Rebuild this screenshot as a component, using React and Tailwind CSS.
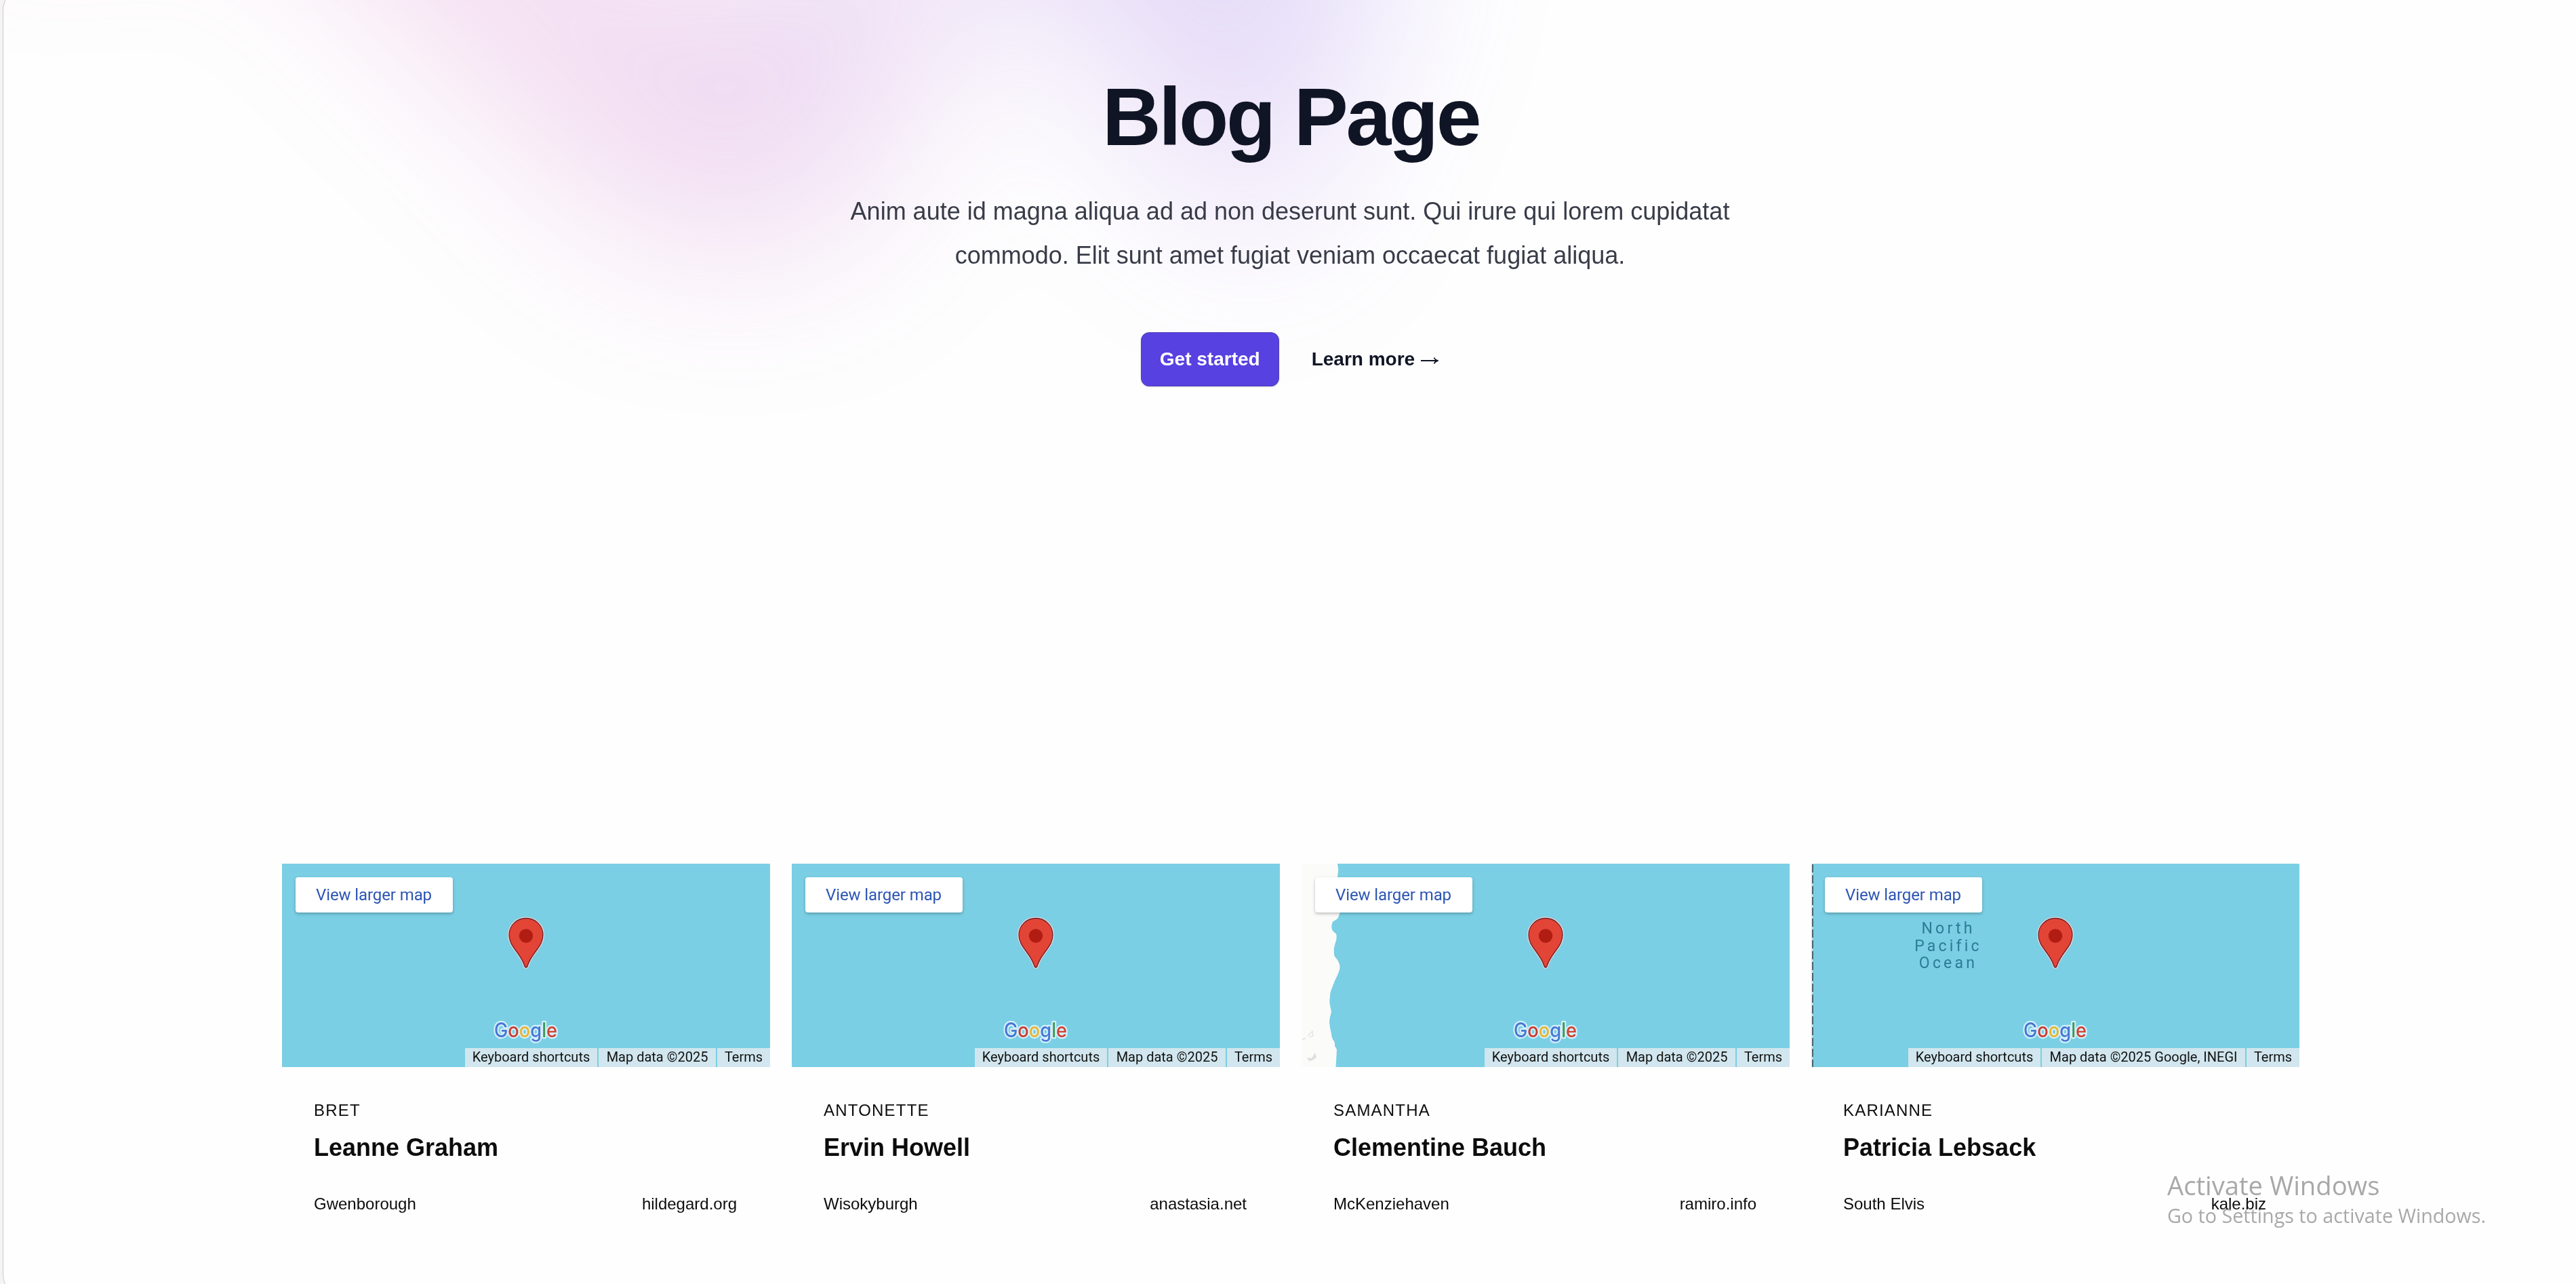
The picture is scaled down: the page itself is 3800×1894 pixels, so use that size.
const people = [
  { username: 'Bret', name: 'Leanne Graham', city: 'Gwenborough', site: 'hildegard.org', credit: 'Map data ©2025', creditWidth: 'w-[173px]' },
  { username: 'Antonette', name: 'Ervin Howell', city: 'Wisokyburgh', site: 'anastasia.net', credit: 'Map data ©2025', creditWidth: 'w-[173px]' },
  { username: 'Samantha', name: 'Clementine Bauch', city: 'McKenziehaven', site: 'ramiro.info', credit: 'Map data ©2025', creditWidth: 'w-[173px]', terrain: 'coast' },
  { username: 'Karianne', name: 'Patricia Lebsack', city: 'South Elvis', site: 'kale.biz', credit: 'Map data ©2025 Google, INEGI', creditWidth: 'w-[300px]', terrain: 'ocean' },
];

function Pin() {
  return (
    <svg className="absolute left-[333px] top-[78px] h-[78px] w-[54px]" viewBox="0 0 54 78">
      <path
        d="M27 1.5C12.6 1.5 1 12.8 1 27c0 9.400 4.500 16 10 23.500 6 8 10 13.500 12.300 21 .8 2.800 1.600 4.500 3.700 4.500s2.900-1.700 3.700-4.500C33 64 37 58.500 43 50.500 48.500 43 53 36.400 53 27 53 12.800 41.400 1.500 27 1.500Z"
        fill="#e24536" stroke="#e9d3d0" strokeWidth="2"
      />
      <path
        d="M27 2.500C13.200 2.500 2 13.300 2 27c0 9 4.300 15.600 9.800 23 6 8 10.200 13.800 12.500 21.300.7 2.500 1.300 3.700 2.700 3.700s2-1.200 2.700-3.700C32 63.800 36.200 58 42.200 50 47.700 42.600 52 36 52 27 52 13.300 40.800 2.500 27 2.500Z"
        fill="#e24536" stroke="#6d2230" strokeWidth="1.300"
      />
      <circle cx="27" cy="28.500" r="10.200" fill="#b11d12" />
    </svg>
  );
}

function GoogleMark() {
  return (
    <svg className="absolute left-[308px] top-[226px] h-[44px] w-[104px]" viewBox="0 0 104 44">
      <text
        x="5" y="30" fontFamily="Inter, sans-serif" fontSize="29.500" fontWeight="500"
        textLength="93" lengthAdjust="spacingAndGlyphs" paintOrder="stroke" stroke="#d6f0fa" strokeWidth="4.500" strokeLinejoin="round"
      >
        <tspan fill="#4678d4">G</tspan>
        <tspan fill="#cb3b30">o</tspan>
        <tspan fill="#e8b62f">o</tspan>
        <tspan fill="#4678d4">g</tspan>
        <tspan fill="#3b9a57">l</tspan>
        <tspan fill="#cf4334">e</tspan>
      </text>
    </svg>
  );
}

function Coast() {
  return (
    <svg className="absolute inset-0 h-full w-full" viewBox="0 0 720 300">
      <path
        d="M0 0H53L54.300 9 53 19 57 70 C56 75 54 80 53 81 C50 84 46 84 45 88 C44 93 44 96 46 99 C48 102 51 102 51.500 105 C52 111 51 113 49 120 C47 126 48 130 48 134 C49 139 53 140 54.500 145 C57 150 57 153 55.500 158 C53 166 50 170 48.500 174 C46 181 42 188 42 196 C40 206 43 212 44 218 C43 224 40 230 41.500 238 C42 244 44 248 44.500 255 C46 261 50 262 49 269 L52 274 50.500 300H0Z"
        fill="#fbfbfa"
      />
      <path d="M9 254l7-7 1 7-6 2M1 260l5-3" stroke="#e4e4e4" strokeWidth="1.500" fill="none" />
      <path d="M8 286l7 1 5-8 2 7-6 4-5 1Z" fill="#dedede" />
    </svg>
  );
}

function Ocean() {
  return (
    <>
      <svg className="absolute left-0 top-0 h-[300px] w-[4px]" viewBox="0 0 4 300">
        <path d="M1 0V300" stroke="#e7f3f7" strokeWidth="1.500" />
        <path d="M2 1V300" stroke="#51606e" strokeWidth="2" strokeDasharray="12 4" />
      </svg>
      <div className="absolute left-[130px] top-[83px] w-[144px] text-center font-['Roboto',sans-serif] text-[23px] leading-[25.700px] tracking-[4.200px] text-[#2b7c94]">
        North<br />Pacific<br />Ocean
      </div>
    </>
  );
}

function MapEmbed({ person }) {
  return (
    <div className="relative flex h-[300px] flex-col justify-between overflow-hidden bg-[#7acfe4] font-['Roboto',sans-serif]">
      {person.terrain === 'coast' && <Coast />}
      {person.terrain === 'ocean' && <Ocean />}
      <a className="relative ml-5 mt-[20px] flex h-[52px] w-[232px] items-center justify-center rounded-[4px] bg-white pr-px text-[24px] tracking-[-0.100px] text-[#2c55b3] shadow-[0_2px_4px_rgba(0,0,0,0.25)]">
        View larger map
      </a>
      <Pin />
      <GoogleMark />
      <div className="flex h-[28px] justify-end gap-[2px] text-[20px] leading-[27px] text-[#111] *:bg-[#d1e6ee] *:text-center">
        <span className="w-[195px]">Keyboard shortcuts</span>
        <span className={person.creditWidth}>{person.credit}</span>
        <span className="w-[78px]">Terms</span>
      </div>
    </div>
  );
}

function Card({ person }) {
  return (
    <article className="w-[720px]">
      <MapEmbed person={person} />
      <div className="pl-[47px] pr-[49px] pt-11 text-[#0c0c0c]">
        <p className="text-[24px] uppercase leading-10 tracking-wider">{person.username}</p>
        <h2 className="mt-[7px] text-[36px] font-bold leading-[56px]">{person.name}</h2>
        <div className="mt-[37px] flex justify-between text-[24px] leading-9">
          <span>{person.city}</span>
          <span>{person.site}</span>
        </div>
      </div>
    </article>
  );
}

export default function App() {
  return (
    <div className="relative h-[1894px] overflow-hidden bg-[#f4f4f4] pl-[4px] font-['Liberation_Sans',Arial,sans-serif]">
      <div className="relative isolate -mt-[17px] h-[1929px] overflow-hidden rounded-l-[32px] border-l border-[#c9c9c9] bg-[#fefefe]">
        <div className="absolute inset-x-0 -top-[975px] -z-10 transform-gpu overflow-hidden opacity-30 blur-[128px]" aria-hidden="true">
          <div className="relative left-[calc(50%-958px)] aspect-[1155/678] w-[2310px] -translate-x-1/2 rotate-[30deg] bg-gradient-to-tr from-[#ff80b5] to-[#9089fc] [clip-path:polygon(74.1%_44.1%,100%_61.6%,97.5%_26.9%,85.5%_0.1%,80.7%_2%,72.5%_32.5%,60.2%_62.4%,52.4%_68.1%,47.5%_58.3%,45.2%_34.5%,27.5%_76.7%,0.1%_64.9%,17.9%_100%,27.6%_76.8%,76.1%_97.7%,74.1%_44.1%)]" />
        </div>

        <header className="flex h-[1291px] flex-col items-center pl-px pt-[129px] text-center">
          <h1 className="pl-[2px] text-[120px] font-bold leading-none tracking-[-3.400px] text-[#101526]">Blog Page</h1>
          <p className="mt-12 w-[1344px] text-[36px] leading-[1.8] text-[#383b48]">
            Anim aute id magna aliqua ad ad non deserunt sunt. Qui irure qui lorem cupidatat commodo. Elit sunt amet fugiat veniam occaecat fugiat aliqua.
          </p>
          <div className="mt-20 flex items-center gap-x-12 text-[28px] font-bold">
            <a className="flex h-20 items-center rounded-xl border border-[#4f41b8] bg-[#5741e0] px-[27px] text-white shadow-sm">Get started</a>
            <a className="flex items-center gap-2 text-[#101526]">
              Learn more
              <svg className="mt-1 h-3 w-[28px]" viewBox="0 0 28 12" fill="none" stroke="currentColor" strokeWidth="1.800">
                <path d="M1 6H26M20.500 1.500Q22 5 26.500 6Q22 7 20.500 10.500" />
              </svg>
            </a>
          </div>
        </header>

        <main className="ml-[411px] flex gap-8">
          {people.map((person) => <Card key={person.username} person={person} />)}
        </main>
      </div>

      <div className="absolute left-[3197px] top-[1720px] whitespace-nowrap font-['Open_Sans','Noto_Sans',sans-serif] text-[#6e6e6e]/60">
        <div className="text-[38.200px] leading-[56px]">Activate Windows</div>
        <div className="text-[28.700px] leading-[34px]">Go to Settings to activate Windows.</div>
      </div>
    </div>
  );
}
